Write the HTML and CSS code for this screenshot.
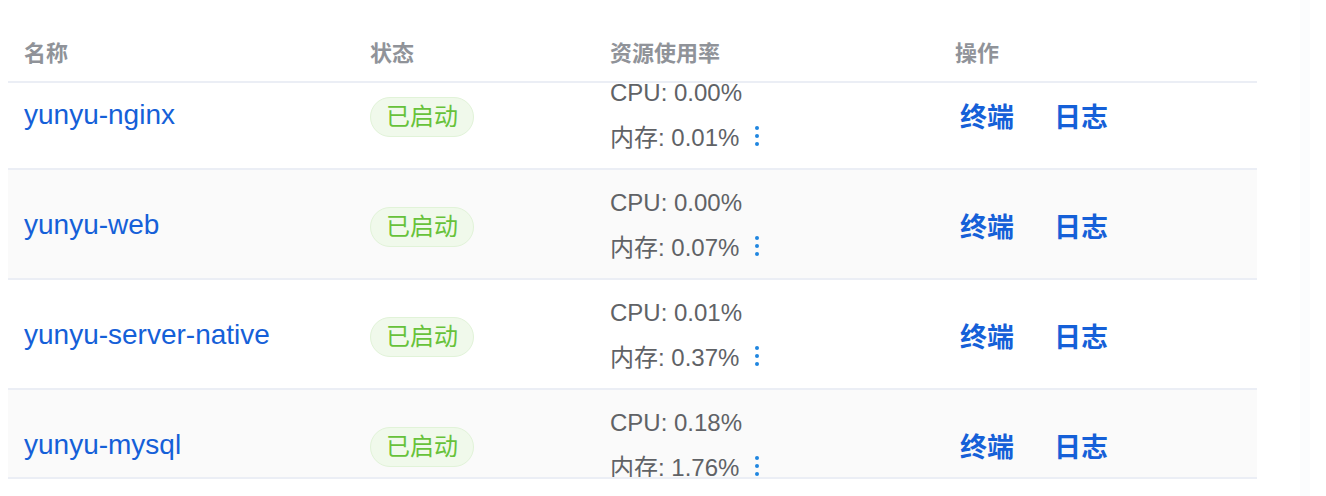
FILE: index.html
```html
<!DOCTYPE html>
<html lang="zh">
<head>
<meta charset="utf-8">
<link rel="stylesheet" href="styles.css">
</head>
<body>
<div class="page">
  <div class="table">
    <div class="thead">
      <div class="th">名称</div>
      <div class="th">状态</div>
      <div class="th">资源使用率</div>
      <div class="th">操作</div>
    </div>
    <div class="tbody">
      <div class="row first">
        <div class="cell"><a class="name">yunyu-nginx</a></div>
        <div class="cell"><span class="badge">已启动</span></div>
        <div class="cell res">
          <div class="line">CPU: 0.00%</div>
          <div class="line">内存: 0.01% <span class="kebab"><i></i><i></i><i></i></span></div>
        </div>
        <div class="cell ops"><a class="op">终端</a><a class="op">日志</a></div>
      </div>
      <div class="row striped">
        <div class="cell"><a class="name">yunyu-web</a></div>
        <div class="cell"><span class="badge">已启动</span></div>
        <div class="cell res">
          <div class="line">CPU: 0.00%</div>
          <div class="line">内存: 0.07% <span class="kebab"><i></i><i></i><i></i></span></div>
        </div>
        <div class="cell ops"><a class="op">终端</a><a class="op">日志</a></div>
      </div>
      <div class="row">
        <div class="cell"><a class="name">yunyu-server-native</a></div>
        <div class="cell"><span class="badge">已启动</span></div>
        <div class="cell res">
          <div class="line">CPU: 0.01%</div>
          <div class="line">内存: 0.37% <span class="kebab"><i></i><i></i><i></i></span></div>
        </div>
        <div class="cell ops"><a class="op">终端</a><a class="op">日志</a></div>
      </div>
      <div class="row striped">
        <div class="cell"><a class="name">yunyu-mysql</a></div>
        <div class="cell"><span class="badge">已启动</span></div>
        <div class="cell res">
          <div class="line">CPU: 0.18%</div>
          <div class="line">内存: 1.76% <span class="kebab"><i></i><i></i><i></i></span></div>
        </div>
        <div class="cell ops"><a class="op">终端</a><a class="op">日志</a></div>
      </div>
    </div>
  </div>
  <div class="scrolltrack"></div>
</div>
</body>
</html>
```

FILE: styles.css
```css
* { box-sizing: border-box; }
html, body { margin: 0; padding: 0; background: #fff; }
body {
  font-family: "Liberation Sans", Arial, "Noto Sans CJK SC", sans-serif;
  color: #606266;
}
.page {
  display: flex;
  padding-left: 8px;
  height: 496px;
}
.table {
  width: 1249px;
  display: flex;
  flex-direction: column;
}
.thead {
  display: grid;
  grid-template-columns: 346px 240px 345px 1fr;
  height: 83px;
  border-bottom: 2px solid #ebeef5;
  align-items: end;
  padding-bottom: 12px;
}
.th {
  padding-left: 16px;
  font-size: 22px;
  font-weight: bold;
  color: #909399;
  line-height: 30px;
}
.tbody {
  height: 396px;
  overflow: hidden;
  border-bottom: 2px solid #ebeef5;
}
.row {
  display: grid;
  grid-template-columns: 346px 240px 345px 1fr;
  height: 110px;
  border-bottom: 2px solid #ebeef5;
  align-items: center;
}
.row.first { margin-top: -23px; }
.row.striped { background: #fafafa; }
.cell { padding-left: 16px; }
.name {
  display: inline-block;
  color: #1560d8;
  font-size: 28px;
  line-height: 30px;
  text-decoration: none;
  margin-top: 2px;
}
.badge {
  display: inline-block;
  height: 40px;
  line-height: 38px;
  padding: 0 15px;
  border-radius: 20px;
  background: #f0f9eb;
  border: 1px solid #e1f3d8;
  color: #67c23a;
  font-size: 24px;
  margin-top: 6px;
}
.res { display: flex; flex-direction: column; gap: 17px; padding-top: 3px; }
.line { font-size: 24px; line-height: 28px; color: #606266; display: flex; align-items: center; }
.kebab {
  display: inline-flex;
  flex-direction: column;
  gap: 4px;
  margin-left: 16px;
  margin-top: -4px;
}
.kebab i {
  display: block;
  width: 4px;
  height: 4px;
  border-radius: 50%;
  background: #1f86e0;
}
.ops { display: flex; gap: 40px; padding-left: 21px; padding-top: 2px; }
.op {
  color: #1560d8;
  font-size: 27px;
  font-weight: bold;
  text-decoration: none;
}
.scrolltrack {
  width: 10px;
  margin-left: 43px;
  background: #fbfcfd;
}
```
